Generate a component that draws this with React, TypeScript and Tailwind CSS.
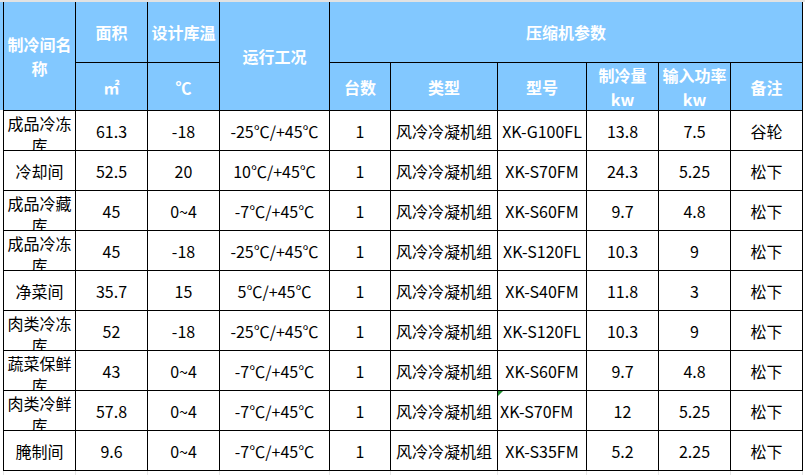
import React from "react";

const FONT = { fontFamily: '"Noto Sans CJK SC", "Liberation Sans", sans-serif' };

const rows = [
  ["成品冷冻库", "61.3", "-18", "-25℃/+45℃", "1", "风冷冷凝机组", "XK-G100FL", "13.8", "7.5", "谷轮"],
  ["冷却间", "52.5", "20", "10℃/+45℃", "1", "风冷冷凝机组", "XK-S70FM", "24.3", "5.25", "松下"],
  ["成品冷藏库", "45", "0~4", "-7℃/+45℃", "1", "风冷冷凝机组", "XK-S60FM", "9.7", "4.8", "松下"],
  ["成品冷冻库", "45", "-18", "-25℃/+45℃", "1", "风冷冷凝机组", "XK-S120FL", "10.3", "9", "松下"],
  ["净菜间", "35.7", "15", "5℃/+45℃", "1", "风冷冷凝机组", "XK-S40FM", "11.8", "3", "松下"],
  ["肉类冷冻库", "52", "-18", "-25℃/+45℃", "1", "风冷冷凝机组", "XK-S120FL", "10.3", "9", "松下"],
  ["蔬菜保鲜库", "43", "0~4", "-7℃/+45℃", "1", "风冷冷凝机组", "XK-S60FM", "9.7", "4.8", "松下"],
  ["肉类冷鲜库", "57.8", "0~4", "-7℃/+45℃", "1", "风冷冷凝机组", "XK-S70FM", "12", "5.25", "松下"],
  ["腌制间", "9.6", "0~4", "-7℃/+45℃", "1", "风冷冷凝机组", "XK-S35FM", "5.2", "2.25", "松下"],
];

const cols = "grid-cols-[71px_71px_71px_109px_60px_106px_88px_71px_71px_71px]";

function Head({ children, className = "" }: { children: React.ReactNode; className?: string }) {
  return (
    <div className={`bg-[#82c8ff] text-white font-bold text-[16px] leading-[24px] flex items-center justify-center text-center ${className}`}>
      {children}
    </div>
  );
}

export default function App() {
  return (
    <div className="w-[805px] h-[475px] bg-white overflow-hidden text-[16px]" style={FONT}>
      <div className="h-[2px] bg-[#e2e2e2]" />
      <div className="flex">
        <div className="w-[3px]">
          <div className="h-[108px] bg-[#82c8ff]" />
        </div>
        <div className={`grid ${cols} grid-rows-[60px_47px_repeat(9,39px)] gap-px bg-black px-px pb-px`}>
          <Head className="row-span-2">
            <span className="block w-full break-all">制冷间名称</span>
          </Head>
          <Head>面积</Head>
          <Head>设计库温</Head>
          <Head className="row-span-2">运行工况</Head>
          <Head className="col-span-6">压缩机参数</Head>
          <Head>㎡</Head>
          <Head>℃</Head>
          <Head>台数</Head>
          <Head>类型</Head>
          <Head>型号</Head>
          <Head>制冷量<br />kw</Head>
          <Head>输入功率<br />kw</Head>
          <Head>备注</Head>

          {rows.map((r, i) =>
            r.map((v, j) => {
              const wrap = j === 0 && v.length > 4;
              const marked = i === 7 && j === 6;
              return (
                <div
                  key={`${i}-${j}`}
                  className={`relative bg-white text-black overflow-hidden flex text-center leading-[22px] ${
                    wrap ? "items-start pt-px justify-center" : marked ? "items-center justify-start pl-[2px]" : "items-center justify-center"
                  }`}
                >
                  {marked && (
                    <span className="absolute left-0 top-0 w-0 h-0 border-t-[5px] border-t-[#1f8f2f] border-r-[5px] border-r-transparent" />
                  )}
                  <span className={wrap ? "block w-full px-[3px] break-all" : "whitespace-nowrap"}>{v}</span>
                </div>
              );
            })
          )}
        </div>
      </div>
      <div className="flex">
        <div className="w-[3px]" />
        <div className={`grid ${cols} h-[4px] gap-px bg-[#e4e4e4] px-px`}>
          {Array.from({ length: 10 }).map((_, k) => (
            <div key={k} className="bg-white" />
          ))}
        </div>
      </div>
    </div>
  );
}
